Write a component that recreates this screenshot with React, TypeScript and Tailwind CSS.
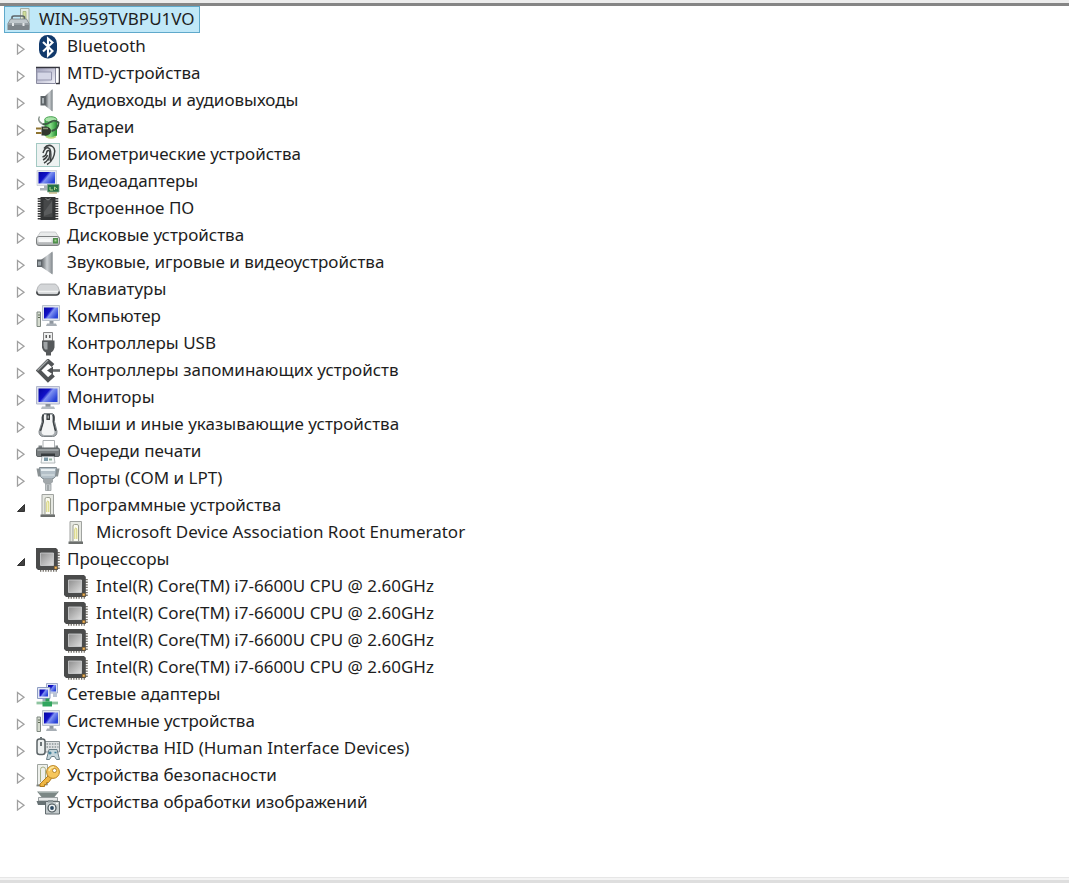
import React, { useState } from 'react';

type IconProps = { children: React.ReactNode };

const Svg = ({ children }: IconProps) => (
  <svg viewBox="0 0 24 24" className="h-6 w-6 shrink-0" aria-hidden="true">
    {children}
  </svg>
);

const Gradients = () => (
  <svg className="absolute h-0 w-0" aria-hidden="true">
    <defs>
      <linearGradient id="metal" x1="0" y1="0" x2="1" y2="0">
        <stop offset="0" stopColor="#5f6468" />
        <stop offset="0.5" stopColor="#cdd1d4" />
        <stop offset="1" stopColor="#8b9094" />
      </linearGradient>
      <linearGradient id="plate" x1="0" y1="0" x2="1" y2="1">
        <stop offset="0" stopColor="#8e8e8e" />
        <stop offset="1" stopColor="#dedede" />
      </linearGradient>
      <linearGradient id="shell" x1="0" y1="0" x2="0" y2="1">
        <stop offset="0" stopColor="#f7f8f8" />
        <stop offset="1" stopColor="#a5a8aa" />
      </linearGradient>
      <linearGradient id="screen" x1="0" y1="0" x2="1" y2="0.6">
        <stop offset="0" stopColor="#0505a0" />
        <stop offset="0.45" stopColor="#1212c8" />
        <stop offset="0.6" stopColor="#7f92f2" />
        <stop offset="1" stopColor="#2a44d8" />
      </linearGradient>
      <linearGradient id="card" x1="0" y1="0" x2="1" y2="1">
        <stop offset="0" stopColor="#9c9db8" />
        <stop offset="1" stopColor="#f3f3fa" />
      </linearGradient>
      <linearGradient id="leaf" x1="0" y1="0" x2="1" y2="0">
        <stop offset="0" stopColor="#2f9a3c" />
        <stop offset="0.45" stopColor="#8be08b" />
        <stop offset="1" stopColor="#1f8a2c" />
      </linearGradient>
    </defs>
  </svg>
);

const RootIcon = () => (
  <Svg>
    <path d="M13.500 0.500h8.500v20h-8.500z" fill="#e6ece4" stroke="#a3aea5" />
    <path d="M16 3.500h3v10h-3z" fill="#d3df9c" stroke="#a2b27c" strokeWidth="0.8" />
    <path d="M5 11V9.500Q5 8 7 8h8.500q2 0 2 2v1" fill="none" stroke="#5c6368" strokeWidth="1.600" />
    <path d="M3.500 11h16l2.500 4.500H1z" fill="#bfc7cb" stroke="#7b8387" strokeWidth="0.8" />
    <path d="M0.500 15.500h22V22h-22z" fill="#7d858a" />
    <path d="M1 16h21" stroke="#a9b2b6" />
    <path d="M5 15h2v3H5zM15.500 15h2v3h-2z" fill="#e2e6e8" />
  </Svg>
);

const BluetoothIcon = () => (
  <Svg>
    <rect x="3" y="0" width="18" height="23.500" rx="8.500" fill="#123a6c" />
    <path d="M7 7l9.500 9L12 20.500v-17l4.500 4L7 16.500" fill="none" stroke="#fff" strokeWidth="2.100" />
  </Svg>
);

const MtdIcon = () => (
  <Svg>
    <path d="M0.500 5.500h19v16h-19z" fill="url(#card)" stroke="#8a8b9f" />
    <path d="M1 10h14.500v8H1z" fill="#d5d6e6" stroke="#9495ad" />
    <path d="M0 5.500h23.200V21.500H20" fill="none" stroke="#34343e" strokeWidth="1.400" />
    <path d="M20 6.500h2.500v14H20z" fill="#fff" />
  </Svg>
);

const AudioPortIcon = () => (
  <Svg>
    <path d="M4.500 7h6v9.500h-6z" fill="#5d6367" />
    <path d="M6 9h2v5.500H6z" fill="#a9b0b4" />
    <path d="M9.500 6.500L16.500 0v22.500L9.500 17z" fill="url(#metal)" />
    <path d="M16 1v21" stroke="#8f979b" />
  </Svg>
);

const SpeakerIcon = () => (
  <Svg>
    <path d="M1 8.500h6V16H1z" fill="#5d6367" />
    <path d="M2 10.500h3v4H2z" fill="#9da5aa" />
    <path d="M5.500 8.500L16.500 0.500v23L5.500 16z" fill="url(#metal)" />
    <path d="M16 1.500v21" stroke="#8b9397" />
  </Svg>
);

const BatteryIcon = () => (
  <Svg>
    <path d="M8.500 3.500v16q5 5 12.500 0v-16z" fill="url(#leaf)" />
    <path d="M10 20.500q5 3 10 0" fill="none" stroke="#b9d77c" strokeWidth="1.500" />
    <ellipse cx="14.800" cy="3.500" rx="6" ry="2.800" fill="#a8e3a8" stroke="#46a04f" />
    <path d="M6.500 8Q1 5 3.500 0.500" fill="none" stroke="#8a948d" strokeWidth="1.500" />
    <path d="M6.500 8q4 1 8-2t8 0.500q0 7-7 8.500" fill="none" stroke="#3c5b43" strokeWidth="1.900" />
    <path d="M5.500 10.500h5q4.500 1 4.500 4.500t-4.500 4.500h-5z" fill="#31382e" />
    <path d="M7 12.500h5" stroke="#8b957a" strokeWidth="1.500" />
    <path d="M0 12.500h5.500M0 17h5.500" stroke="#8f7430" strokeWidth="2" />
  </Svg>
);

const FingerprintIcon = () => (
  <Svg>
    <rect x="0.500" y="0.500" width="23" height="23" fill="#edf2f1" stroke="#a3c9c3" />
    <g fill="none" stroke="#3d4141" strokeWidth="1.500">
      <path d="M8 5.500Q12 0.500 16.500 3.500t0 12.500" />
      <path d="M7 10Q9 4 12.500 5t2 13" />
      <path d="M6.500 14q3.500-1 4-4t2.500-2.500-0.500 10" />
      <path d="M7 17q3.500-1.500 4.500-5M8 20q3-1.500 4.500-4.500M11 21.500q4-2 5.500-6" />
    </g>
  </Svg>
);

const DisplayAdapterIcon = () => (
  <Svg>
    <path d="M1 0.500h19.500v15H1z" fill="#e4e8ee" stroke="#c6ccd6" strokeWidth="0.8" />
    <path d="M2.500 2h16.500v11.500H2.500z" fill="url(#screen)" />
    <path d="M8 15.500h5v3H8zM4 18h8.500v2.500H4z" fill="#a9b1b8" />
    <path d="M11.500 14.500H23V22H11.500z" fill="#287345" stroke="#80a58c" strokeWidth="0.8" />
    <path d="M14 17v3h3M18.500 20v-3l2.500 2" fill="none" stroke="#b6d68d" />
    <path d="M13 23h8" stroke="#b09b53" />
  </Svg>
);

const FirmwareIcon = () => (
  <Svg>
    <path d="M3.500 1v22M20.500 1v22" stroke="#3d3d3d" strokeWidth="3.600" strokeDasharray="1.500 1" />
    <path d="M4.500 0h15v23h-15z" fill="#333536" />
    <path d="M7.500 3h9v17h-9z" fill="#464849" />
    <path d="M8 15l8-11v12l-8 3z" fill="#5a5c5d" />
    <path d="M9.500 1.500q2.500 3 5 0" fill="none" stroke="#8b8d8e" />
  </Svg>
);

const DiskIcon = () => (
  <Svg>
    <path d="M4.500 8h15l4 6H0.500z" fill="#e9ebeb" stroke="#c0c3c5" strokeWidth="0.8" />
    <rect x="0.500" y="12.500" width="23" height="9" rx="2.500" fill="url(#shell)" stroke="#7d8081" />
    <path d="M2.500 14.500h13v3.500h-13z" fill="#f7f8f8" />
    <path d="M17 14h5v5.500h-5z" fill="#4f8f4b" />
    <path d="M18.500 15.500h2v2h-2z" fill="#a9d695" />
  </Svg>
);

const KeyboardIcon = () => (
  <Svg>
    <path d="M4.500 6h15q3 2 4 7 0 4-3 4h-17q-3 0-3-4 1-5 4-7z" fill="#d4d6d8" stroke="#a9acae" strokeWidth="0.8" />
    <path d="M0.800 13.500q0 3.500 3.200 3.500h16q3.200 0 3.200-3.500" fill="none" stroke="#45484a" strokeWidth="1.600" />
    <path d="M2 13.500h20" stroke="#f2f3f3" strokeWidth="1.500" />
  </Svg>
);

const ComputerIcon = () => (
  <Svg>
    <path d="M1 7h3.500v14.500H1z" fill="#d5dbcf" stroke="#7f8881" />
    <path d="M2 10h2M2 12.500h2" stroke="#5d6a55" />
    <path d="M6.500 0.500h17v15h-17z" fill="#e0e4ec" stroke="#b9c1cb" />
    <path d="M8 2.500h14v11H8z" fill="url(#screen)" />
    <path d="M13.500 16h4v3h-4z" fill="#8f979f" />
    <path d="M11 18.500h9l1 2.500H10z" fill="#a7aeb5" />
  </Svg>
);

const UsbIcon = () => (
  <Svg>
    <path d="M7.500 0.500h9V9h-9z" fill="#eff0f0" stroke="#858585" />
    <path d="M9.500 3H11v3H9.500zM13 3h1.500v3H13z" fill="#5c5c5c" />
    <path d="M6 8.500h12.500v7q-1 4-3.500 5v3h-5v-3q-3-1-4-5z" fill="#55585a" />
    <path d="M7.500 10h4v7.500H9q-1.500-2-1.500-4z" fill="#a0a4a6" />
  </Svg>
);

const StorageIcon = () => (
  <Svg>
    <path d="M17 6.500L12 2 2.500 11.500 12 21l5.500-5" fill="none" stroke="#515456" strokeWidth="4" />
    <path d="M12 1L1.500 11.500" stroke="#a3a7a9" strokeWidth="1.300" />
    <path d="M14 11.500h10" stroke="#64686a" strokeWidth="2.600" />
    <path d="M11 11.500l6-4v8z" fill="#4f5254" />
  </Svg>
);

const MonitorIcon = () => (
  <Svg>
    <path d="M0.500 0.500h23v17.500H0.500z" fill="#dcdfea" stroke="#b2b8cc" />
    <path d="M2.500 2.500h19V16h-19z" fill="url(#screen)" />
    <path d="M9.500 18h5v3h-5z" fill="#8a929a" />
    <path d="M6 20.500h12l1 2.500H5z" fill="#b4bbc1" />
  </Svg>
);

const MouseIcon = () => (
  <Svg>
    <path d="M8 0.500h8.500q2.500 2 2 8l2.500 10q0 5-4.500 5h-9q-4.500 0-4.500-5L6 9Q5 3 8 0.500z" fill="#a9aeb1" stroke="#7d8386" />
    <path d="M7.500 1.500Q6 4 7.500 9L4.500 18M17 1.500Q18.500 4 17 9l2.500 9" fill="none" stroke="#3f4447" strokeWidth="1.800" />
    <path d="M8 2h2.500v5H14V2h2l0.500 7 2 9q0 4-3 4h-7q-3 0-3-4L8 9z" fill="#f4f5f5" />
    <path d="M10.500 1H14v6h-3.500z" fill="#3c4042" />
    <path d="M12.200 2.500v3" stroke="#d0d4d6" />
  </Svg>
);

const PrinterIcon = () => (
  <Svg>
    <path d="M7 0.500h11.500V9H7z" fill="#fff" stroke="#adb1b3" />
    <path d="M2.500 5.500H6v3H2.500zM19.500 5.500H22v3h-2.500z" fill="#7e8486" />
    <rect x="0.500" y="8" width="23" height="8.500" rx="1.500" fill="#777c7e" stroke="#5e6365" />
    <path d="M1.500 10h21" stroke="#c4c9cb" />
    <path d="M5 13.500h14v3H5z" fill="#383c3e" />
    <path d="M6 16.500h12l1 6.500H5z" fill="#f5f8f9" stroke="#a2a8ab" strokeWidth="0.8" />
    <path d="M8 17.500h4V21H8z" fill="#7a97a5" />
    <path d="M13 18.500h3v2h-3z" fill="#91b19c" />
  </Svg>
);

const PortIcon = () => (
  <Svg>
    <path d="M0.500 1.500h3.500v8H2zM20 1.500h3.500l-1.500 8h-2z" fill="#8b9294" />
    <path d="M3.500 0.500h17l-1 9q-1 2-4 2.500h-7q-3-0.500-4-2.500z" fill="#b4c0c8" stroke="#808a90" />
    <path d="M5 3h14" stroke="#e8eff2" strokeWidth="2" />
    <path d="M5.500 8h13" stroke="#d0dade" strokeWidth="1.500" />
    <path d="M7 12h10v3q-2 2.500-5 2.500T7 15z" fill="#a1a7aa" />
    <path d="M9.500 17H15v6.500H9.500z" fill="#c5cacc" stroke="#999fa2" strokeWidth="0.800" />
    <path d="M12 18v5.500" stroke="#7d8386" />
  </Svg>
);

const SoftwareIcon = () => (
  <Svg>
    <path d="M6 0.500h11.500v20.500H6z" fill="#e6e8e2" stroke="#a0a3a0" />
    <path d="M9 20V5q0-1.500 1.500-1.500H13q1.500 0 1.500 1.500v15" fill="#fbfbf2" stroke="#9b9e92" />
    <path d="M10.800 18V9q0-2 1-2t1 2v9" fill="none" stroke="#d3d06c" />
    <path d="M4.500 20.500H19v2.500H4.500z" fill="#6d706e" />
  </Svg>
);

const CpuIcon = () => (
  <Svg>
    <path d="M22.500 4v18M4 22.500h18" stroke="#77736b" strokeWidth="2.600" strokeDasharray="1.300 1.300" />
    <path d="M0 0h20l1.800 1.800V22H2l-2-2z" fill="#4a4b4b" />
    <path d="M4.500 5h13v12.500h-13z" fill="url(#plate)" stroke="#d2d3d4" strokeWidth="0.800" />
    <path d="M18.500 18.500h2.500V21h-2.500z" fill="#f0b45e" stroke="#8e6427" strokeWidth="0.600" />
  </Svg>
);

const NetworkIcon = () => (
  <Svg>
    <path d="M10.500 0.500h11V10h-11z" fill="#dce3f4" stroke="#a0abc8" />
    <path d="M12 2h8v6.500h-8z" fill="url(#screen)" />
    <path d="M17 10h4v4h-4z" fill="#bac4d4" />
    <path d="M1.500 4.500h12.500v11H1.500z" fill="#e3e9f6" stroke="#8e9dc2" />
    <path d="M3.500 6.500h8.500v7H3.500z" fill="url(#screen)" />
    <path d="M6.500 16h4v2h-4z" fill="#9daab9" />
    <path d="M0.500 20h21.500" stroke="#8fc4a0" strokeWidth="2.800" />
    <path d="M6.500 18.500H16v5H6.500z" fill="#31a65e" />
    <path d="M9.500 15.500h4v3h-4z" fill="#319a57" />
  </Svg>
);

const HidIcon = () => (
  <Svg>
    <path d="M9 4.500h14.500V15H9z" fill="#dfe2e3" stroke="#899194" />
    <path d="M10.500 7h12M10.500 10h12" stroke="#8c9598" strokeWidth="1.300" strokeDasharray="1.500 1.200" />
    <rect x="1" y="2" width="8" height="15.500" rx="2.500" fill="#edf0f0" stroke="#5c6467" strokeWidth="1.500" />
    <path d="M4 0h2v3H4zM4 5h2v4H4z" fill="#6c7477" />
    <path d="M13 12.500h8l2.500 10h-3l-2-3h-3l-2 3h-3z" fill="#c6d6dc" stroke="#6a7e87" />
    <path d="M12.500 16h3M14 14.500v3M18.500 15.500h2" stroke="#3f7d97" strokeWidth="1.300" />
  </Svg>
);

const SecurityIcon = () => (
  <Svg>
    <path d="M1.500 0.500h10V21h-10z" fill="#eef0ec" stroke="#9fa5a0" />
    <path d="M4.500 18V5.500Q4.500 3 7 3t2.500 2.500V16" fill="none" stroke="#a8b087" />
    <path d="M0.500 21.500h7" stroke="#7d827d" strokeWidth="1.800" />
    <path d="M12.500 11.500L4 20v2.500h4.500v-2h2v-2h2l3-4z" fill="#efb642" stroke="#a87416" strokeWidth="0.900" />
    <circle cx="17" cy="8" r="6.400" fill="#f6c65c" stroke="#b98424" />
    <path d="M13 7q1-4 5-4" fill="none" stroke="#fce9a5" strokeWidth="1.500" />
    <circle cx="18.500" cy="6.500" r="2" fill="#fff" stroke="#a87416" strokeWidth="0.800" />
  </Svg>
);

const ImagingIcon = () => (
  <Svg>
    <path d="M1 0.500h22L18.500 6h-13z" fill="#7b8785" />
    <path d="M3 1.500h18" stroke="#a4afad" />
    <path d="M2.500 6.500h19V10h-19z" fill="#e6e9e9" stroke="#8c9395" strokeWidth="0.900" />
    <path d="M0.500 10H10v4H2z" fill="#687274" />
    <path d="M9.500 10.500h14v12.500h-14z" fill="#c4cbcd" stroke="#626b6e" />
    <path d="M12 9h5v2.500h-5z" fill="#8e989b" />
    <circle cx="16" cy="17" r="4" fill="#edf1f2" stroke="#465156" strokeWidth="1.200" />
    <circle cx="16" cy="17" r="1.900" fill="#2c4963" />
    <path d="M20 12.500h2" stroke="#fff" strokeWidth="1.300" />
  </Svg>
);

type Device = {
  id: string;
  name: string;
  icon: React.ComponentType;
  children?: string[];
};

const cpu = 'Intel(R) Core(TM) i7-6600U CPU @ 2.60GHz';

const devices: Device[] = [
  { id: 'bluetooth', name: 'Bluetooth', icon: BluetoothIcon },
  { id: 'mtd', name: 'MTD-устройства', icon: MtdIcon },
  { id: 'audio', name: 'Аудиовходы и аудиовыходы', icon: AudioPortIcon },
  { id: 'battery', name: 'Батареи', icon: BatteryIcon },
  { id: 'biometric', name: 'Биометрические устройства', icon: FingerprintIcon },
  { id: 'display', name: 'Видеоадаптеры', icon: DisplayAdapterIcon },
  { id: 'firmware', name: 'Встроенное ПО', icon: FirmwareIcon },
  { id: 'disk', name: 'Дисковые устройства', icon: DiskIcon },
  { id: 'sound', name: 'Звуковые, игровые и видеоустройства', icon: SpeakerIcon },
  { id: 'keyboard', name: 'Клавиатуры', icon: KeyboardIcon },
  { id: 'computer', name: 'Компьютер', icon: ComputerIcon },
  { id: 'usb', name: 'Контроллеры USB', icon: UsbIcon },
  { id: 'storage', name: 'Контроллеры запоминающих устройств', icon: StorageIcon },
  { id: 'monitor', name: 'Мониторы', icon: MonitorIcon },
  { id: 'mouse', name: 'Мыши и иные указывающие устройства', icon: MouseIcon },
  { id: 'print', name: 'Очереди печати', icon: PrinterIcon },
  { id: 'ports', name: 'Порты (COM и LPT)', icon: PortIcon },
  {
    id: 'software',
    name: 'Программные устройства',
    icon: SoftwareIcon,
    children: ['Microsoft Device Association Root Enumerator'],
  },
  { id: 'cpu', name: 'Процессоры', icon: CpuIcon, children: [cpu, cpu, cpu, cpu] },
  { id: 'network', name: 'Сетевые адаптеры', icon: NetworkIcon },
  { id: 'system', name: 'Системные устройства', icon: ComputerIcon },
  { id: 'hid', name: 'Устройства HID (Human Interface Devices)', icon: HidIcon },
  { id: 'security', name: 'Устройства безопасности', icon: SecurityIcon },
  { id: 'imaging', name: 'Устройства обработки изображений', icon: ImagingIcon },
];

const Arrow = ({ open }: { open: boolean }) => (
  <svg viewBox="0 0 10 12" className="h-3 w-2.5" aria-hidden="true">
    {open ? (
      <path d="M8.500 2.500v7H1.500z" fill="#404040" stroke="#333" />
    ) : (
      <path d="M1.500 1.500v9.500l6.500-4.750z" fill="#fff" stroke="#a0a0a0" strokeWidth="1.300" />
    )}
  </svg>
);

const App = () => {
  const [expanded, setExpanded] = useState<string[]>(['software', 'cpu']);

  const toggle = (id: string) => {
    setExpanded((prev) => (prev.includes(id) ? prev.filter((item) => item !== id) : [...prev, id]));
  };

  return (
    <div className="flex min-h-screen flex-col bg-white font-['Noto_Sans','Open_Sans',sans-serif] text-[17px] leading-6 text-[#1e1e1e]">
      <Gradients />
      <div className="h-1.5 border-b-3 border-[#858585] bg-[#ececec]" />

      <main className="flex-1 pl-1">
        <ul role="tree" aria-label="WIN-959TVBPU1VO">
          <li role="treeitem" aria-expanded="true" aria-selected="true">
            <div className="flex h-[27px] w-fit items-center gap-2 border border-[#5fa9cb] bg-[#c0e8f8] pr-1 pl-0.5 whitespace-nowrap">
              <RootIcon />
              <span className="pb-0.5">WIN-959TVBPU1VO</span>
            </div>

            <ul role="group">
              {devices.map((device) => {
                const open = expanded.includes(device.id);
                return (
                  <li key={device.id} role="treeitem" aria-expanded={open} aria-selected="false">
                    <div className="flex h-[27px] items-center pl-3 whitespace-nowrap">
                      <button
                        type="button"
                        aria-label={device.name}
                        onClick={() => toggle(device.id)}
                        className="mr-2 flex h-6 w-3 items-center pt-1"
                      >
                        <Arrow open={open} />
                      </button>
                      <device.icon />
                      <span className="ml-[7px] pb-0.5">{device.name}</span>
                    </div>

                    {open && device.children && (
                      <ul role="group">
                        {device.children.map((child, index) => (
                          <li
                            key={index}
                            role="treeitem"
                            aria-selected="false"
                            className="flex h-[27px] items-center gap-2 pl-15 whitespace-nowrap"
                          >
                            <device.icon />
                            <span className="pb-0.5">{child}</span>
                          </li>
                        ))}
                      </ul>
                    )}
                  </li>
                );
              })}
            </ul>
          </li>
        </ul>
      </main>

      <div className="h-1.5 border-t border-b-3 border-t-[#e6e6e6] border-b-[#dedede] bg-[#f4f4f4]" />
    </div>
  );
};

export default App;
